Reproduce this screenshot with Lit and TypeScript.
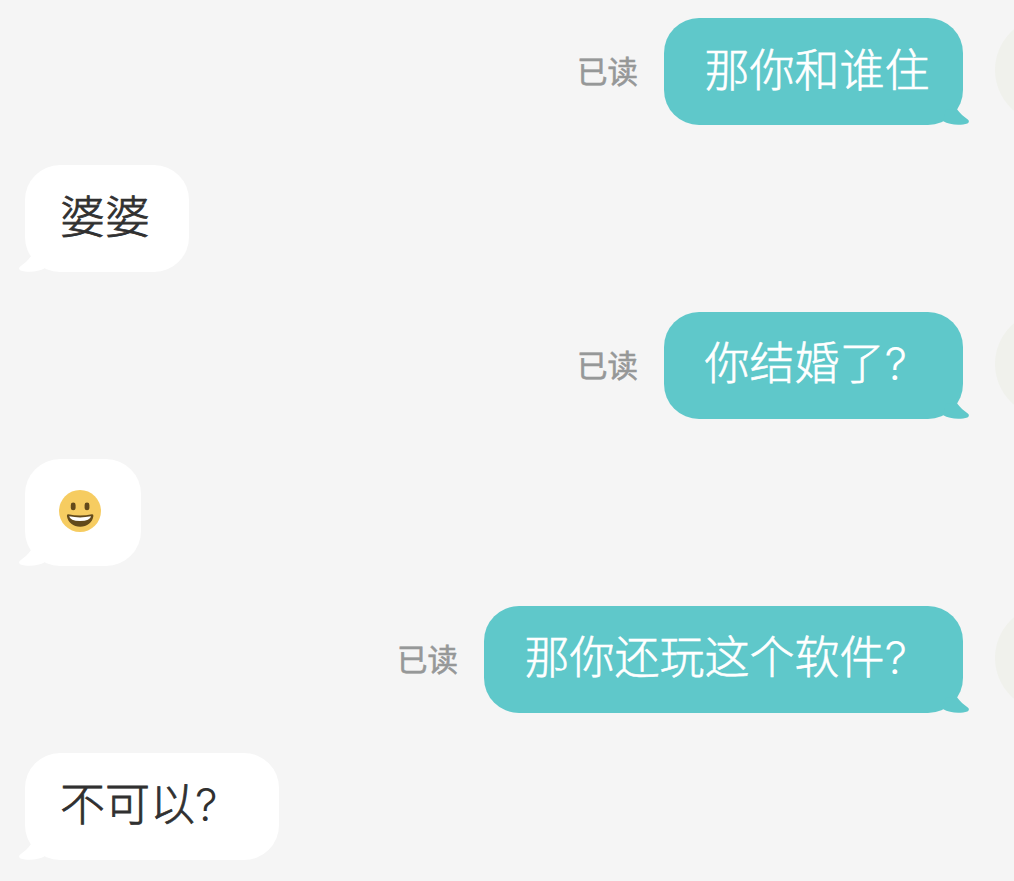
import {css, html, LitElement, svg} from 'lit';
import {customElement, property} from 'lit/decorators.js';

interface Message {
  text: string;
  own: boolean;
}

const MESSAGES: Message[] = [
  {text: '那你和谁住', own: true},
  {text: '婆婆', own: false},
  {text: '你结婚了?', own: true},
  {text: '😀', own: false},
  {text: '那你还玩这个软件?', own: true},
  {text: '不可以?', own: false},
];

const grin = html`
  <svg class="emoji" viewBox="0 0 42 42" role="img" aria-label="😀">
    ${svg`
      <circle cx="21" cy="21" r="21" fill="#f6cc61"></circle>
      <rect x="11.8" y="12.6" width="4.8" height="7.6" rx="2.4" fill="#634a1b"></rect>
      <rect x="25.6" y="12.6" width="4.8" height="7.6" rx="2.4" fill="#634a1b"></rect>
      <path d="M9.2 24.2Q21 26.8 33 24.2Q34.6 24 34.4 26C33.6 32.6 28 36.8 21.2 36.8S8.8 32.6 7.9 26Q7.8 24 9.2 24.2Z" fill="#634a1b"></path>
      <path d="M10.2 26.3Q21 28.6 32 26.3Q31.3 31 21.1 31T10.2 26.3Z" fill="#fff"></path>
    `}
  </svg>
`;

/** A speech bubble with a small tail in the bottom corner. */
@customElement('chat-bubble')
export class ChatBubble extends LitElement {
  @property({type: String})
  text = '';

  @property({type: Boolean, reflect: true})
  own = false;

  static override styles = css`
    :host {
      display: flex;
      align-items: center;
      position: relative;
      box-sizing: border-box;
      height: 106.5px;
      padding: 0 39px 6px 35px;
      border-radius: 35px;
      background: #fff;
      color: #303030;
      font-size: 45px;
      font-weight: 300;
      line-height: 66px;
      white-space: nowrap;
      -webkit-text-stroke: 0.8px currentColor;
    }

    :host([own]) {
      padding: 0 33.5px 6px 40.5px;
      background: #5fc8ca;
      color: #fff;
      -webkit-text-stroke-width: 0.6px;
    }

    .tail {
      position: absolute;
      left: -9px;
      bottom: -1px;
      width: 30px;
      height: 20px;
      fill: #fff;
      transform: scaleX(-1);
    }

    :host([own]) .tail {
      left: auto;
      right: -9px;
      fill: #5fc8ca;
      transform: none;
    }

    /* Keeps the question mark in a full-width cell. */
    .mark {
      display: inline-block;
      width: 45px;
      font-family: Inter, sans-serif;
      -webkit-text-stroke-width: 0;
    }

    .emoji {
      display: block;
      width: 42px;
      height: 42px;
      margin: 4px 1px 0 -1px;
    }
  `;

  private renderText() {
    if (!this.text.endsWith('?')) {
      return html`<span>${this.text}</span>`;
    }
    return html`<span>${this.text.slice(0, -1)}<span class="mark">?</span></span>`;
  }

  override render() {
    return html`
      ${this.text === '😀' ? grin : this.renderText()}
      <svg class="tail" viewBox="0 0 30 20">
        <path d="M14.6 2.8C18 7.6 22 11 25.8 13.4C27.6 14.6 27 16.6 25.4 17.4C19 19.6 7 19 1.3 15.2L4 4Z"></path>
      </svg>
    `;
  }
}

@customElement('app-root')
export class AppRoot extends LitElement {
  static override styles = css`
    :host {
      display: block;
      box-sizing: border-box;
      height: 881px;
      padding: 18px 0 0 25px;
      overflow: hidden;
      background: #f5f5f5;
      font-family: 'Noto Sans CJK SC', sans-serif;
    }

    .messages {
      display: flex;
      flex-direction: column;
      gap: 40.5px;
    }

    .row {
      display: flex;
      align-items: center;
    }

    .row.own {
      justify-content: flex-end;
      margin-right: -87px;
    }

    .read {
      margin-right: 26px;
      padding-bottom: 2px;
      color: #969898;
      font-size: 30.5px;
      line-height: 44px;
      -webkit-text-stroke: 0.6px currentColor;
    }

    .avatar {
      flex: none;
      width: 106px;
      height: 106px;
      margin: -1px 0 1px 32px;
      border-radius: 50%;
      background: #f0f1ec;
    }
  `;

  private renderMessage(message: Message) {
    if (!message.own) {
      return html`
        <div class="row"><chat-bubble .text=${message.text}></chat-bubble></div>
      `;
    }
    return html`
      <div class="row own">
        <span class="read">已读</span>
        <chat-bubble own .text=${message.text}></chat-bubble>
        <div class="avatar"></div>
      </div>
    `;
  }

  override render() {
    return html`
      <div class="messages">${MESSAGES.map((m) => this.renderMessage(m))}</div>
    `;
  }
}

declare global {
  interface HTMLElementTagNameMap {
    'chat-bubble': ChatBubble;
    'app-root': AppRoot;
  }
}
